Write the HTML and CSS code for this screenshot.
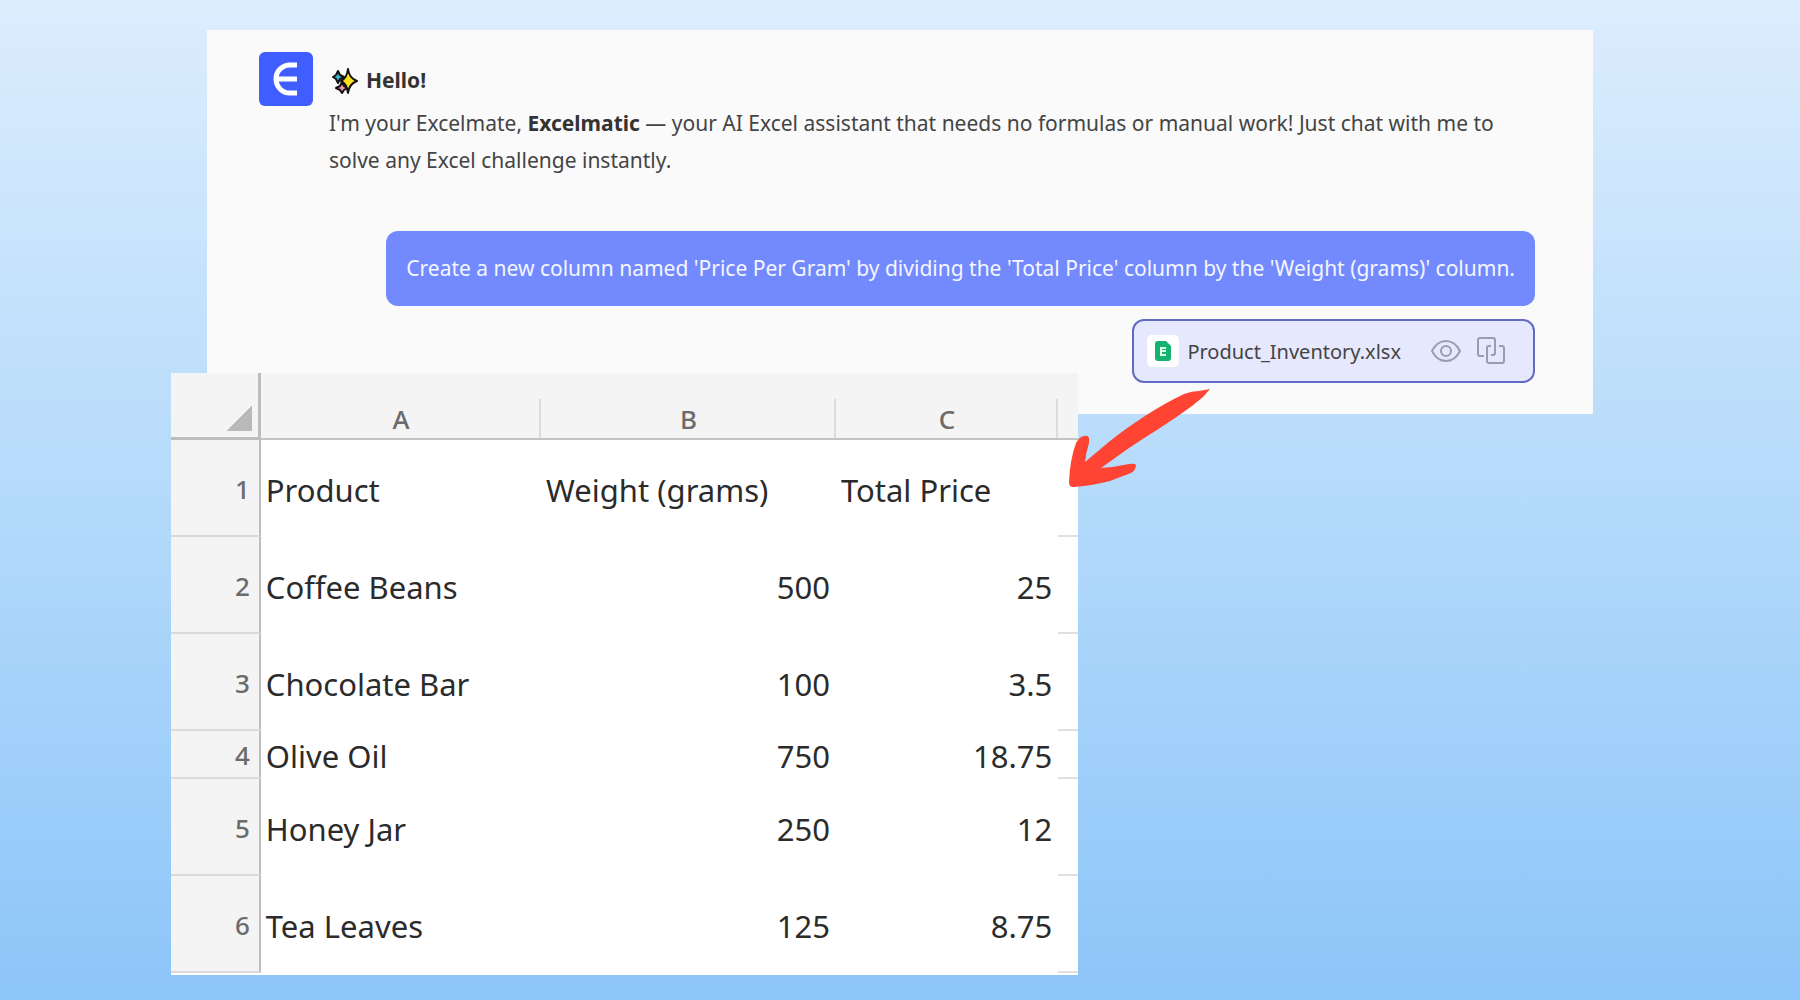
FILE: index.html
```
<!DOCTYPE html>
<html lang="en">
<head>
    <meta charset="UTF-8">
    <meta name="viewport" content="width=device-width, initial-scale=1.0">
    <title>Excelmatic</title>
    <link rel="stylesheet" href="styles.css">
</head>
<body>

    <main class="chat">
        <div class="greeting">
            <svg class="logo" viewBox="0 0 54 54" aria-hidden="true">
                <rect width="54" height="54" rx="6" fill="#405eff"/>
                <path d="M38 13H31A14 14 0 0 0 31 41H38M17 27H38" fill="none" stroke="#fff" stroke-width="5"/>
            </svg>
            <div class="greeting-text">
                <h1 class="hello">
                    <svg class="sparkles" viewBox="0 0 26 26" aria-hidden="true">
                        <g stroke="#111" stroke-width="2" stroke-linejoin="round">
                            <path d="M6 3L8 7L12 9L8 11L6 15L4 11L1 9L4 7Z" fill="#3fb8d4"/>
                            <path d="M10 14L12 18L15 20L12 22L10 25L8 22L4 20L8 18Z" fill="#f296a8"/>
                            <path d="M16 1Q17 10 25 13Q17 16 16 25Q15 16 9 13Q15 10 16 1Z" fill="#fce01c"/>
                        </g>
                    </svg>
                    Hello!
                </h1>
                <p class="intro">I'm your Excelmate, <b>Excelmatic</b> — your AI Excel assistant that needs no formulas or manual work! Just chat with me to solve any Excel challenge instantly.</p>
            </div>
        </div>

        <div class="request">
            <p class="bubble">Create a new column named 'Price Per Gram' by dividing the 'Total Price' column by the 'Weight (grams)' column.</p>
            <div class="file">
                <span class="file-icon">
                    <svg width="16" height="20" viewBox="0 0 16 20" aria-hidden="true">
                        <path d="M3 0H11L16 5V17Q16 20 13 20H3Q0 20 0 17V3Q0 0 3 0Z" fill="#17b26f"/>
                        <path d="M11 7H6V14H11M6 10H11" fill="none" stroke="#d9ffec" stroke-width="2"/>
                    </svg>
                </span>
                <span class="file-name">Product_Inventory.xlsx</span>
                <button class="file-button" aria-label="Preview">
                    <svg width="30" height="22" viewBox="0 0 30 22" aria-hidden="true">
                        <path d="M1 11Q6 1 15 1T29 11Q24 21 15 21T1 11Z"/>
                        <circle cx="15" cy="11" r="5"/>
                    </svg>
                </button>
                <button class="file-button" aria-label="Copy">
                    <svg width="28" height="28" viewBox="0 0 28 28" aria-hidden="true">
                        <path d="M7 19H3Q1 19 1 17V3Q1 1 3 1H16Q18 1 18 3V16Q18 18 16 18H14"/>
                        <path d="M14 9H12Q10 9 10 11V24Q10 26 12 26H25Q27 26 27 24V11Q27 9 25 9H22"/>
                    </svg>
                </button>
            </div>
        </div>
    </main>

    <div class="sheet">
        <table class="sheet-table">
            <colgroup>
                <col class="col-number">
                <col class="col-a">
                <col class="col-b">
                <col class="col-c">
                <col>
            </colgroup>
            <thead>
                <tr>
                    <th class="corner"></th>
                    <th>A</th>
                    <th>B</th>
                    <th>C</th>
                    <th class="rest"></th>
                </tr>
            </thead>
            <tbody>
                <tr><th>1</th><td>Product</td><td>Weight (grams)</td><td>Total Price</td><td class="rest"></td></tr>
                <tr><th>2</th><td>Coffee Beans</td><td class="num">500</td><td class="num">25</td><td class="rest"></td></tr>
                <tr><th>3</th><td>Chocolate Bar</td><td class="num">100</td><td class="num">3.5</td><td class="rest"></td></tr>
                <tr class="short"><th>4</th><td>Olive Oil</td><td class="num">750</td><td class="num">18.75</td><td class="rest"></td></tr>
                <tr><th>5</th><td>Honey Jar</td><td class="num">250</td><td class="num">12</td><td class="rest"></td></tr>
                <tr><th>6</th><td>Tea Leaves</td><td class="num">125</td><td class="num">8.75</td><td class="rest"></td></tr>
            </tbody>
        </table>
        <svg class="arrow" width="150" height="106" viewBox="0 0 150 106" aria-hidden="true">
            <path d="M145 4L134 6Q127 6 119 9Q100 18 80 31Q60 44 45 56L20 77Q21 68 24 58V53Q23 50 19 51Q14 52 11 58Q5 74 4 97Q4 102 8 102Q26 101 45 96L66 88Q71 85 71 80Q70 78 64 79Q50 82 36 83Q50 73 64 63Q79 53 95 43Q112 32 127 21L138 12Z" fill="#ff4433"/>
        </svg>
    </div>

</body>
</html>
```
FILE: styles.css
```
* {
    box-sizing: border-box;
}

body {
    margin: 0;
    min-height: 100vh;
    padding-top: 30px;
    font-family: "Noto Sans", sans-serif;
    background: linear-gradient(#dcedfd, #b8dcfb 45%, #8cc5f9);
}

.chat {
    width: 77%;
    margin-left: 11.5%;
    padding: 22px 58px 31px 52px;
    background-color: #fafafa;
    color: #444444;
    font-size: 21px;
}

.greeting {
    display: flex;
    gap: 16px;
    margin-bottom: 52px;
}

.logo {
    flex: none;
    width: 54px;
    height: 54px;
}

.greeting-text {
    padding-top: 10px;
}

.hello {
    display: flex;
    align-items: center;
    gap: 8px;
    margin: 0;
    padding-left: 3px;
    color: #333333;
    font-size: 21px;
    line-height: 37px;
}

.sparkles {
    width: 26px;
    height: 26px;
}

.intro {
    margin: 6px 0 0;
    line-height: 37px;
}

.intro b {
    color: #333333;
}

.request {
    display: flex;
    flex-direction: column;
    align-items: flex-end;
    gap: 13px;
}

.bubble {
    margin: 0;
    padding: 19px 20px;
    border-radius: 12px;
    background-color: #738aff;
    color: #f4f6ff;
    line-height: 37px;
}

.file {
    display: flex;
    align-items: center;
    height: 64px;
    padding: 0 28px 0 13px;
    border: 2px solid #626bc4;
    border-radius: 12px;
    background-color: #e6e8fd;
}

.file-icon {
    display: flex;
    align-items: center;
    justify-content: center;
    width: 32px;
    height: 32px;
    margin-right: 8px;
    border-radius: 5px;
    background-color: #ffffff;
}

.file-name {
    margin-right: 14px;
    font-size: 20px;
}

.file-button {
    display: flex;
    margin-left: 16px;
    padding: 0;
    border: none;
    background: none;
    cursor: pointer;
}

.file-button svg {
    fill: none;
    stroke: #9a9cb0;
    stroke-width: 2;
}

/* Spreadsheet, lies over the lower left of the chat */
.sheet {
    position: relative;
    width: 50.4%;
    margin: -41px 0 0 9.5%;
    padding-bottom: 2px;
    background-color: #ffffff;
}

.sheet-table {
    width: 100%;
    table-layout: fixed;
    border-spacing: 0;
    color: #2b2b2b;
    font-size: 31px;
}

.col-number {
    width: 9.9%;
}

.col-a {
    width: 30.9%;
}

.col-b {
    width: 32.5%;
}

.col-c {
    width: 24.5%;
}

.sheet-table th {
    background-color: #f4f4f4;
    color: #6b6b6b;
    font-size: 26px;
    font-weight: 500;
}

.sheet-table td {
    padding: 2px 6px 0 5px;
}

.sheet-table thead th {
    height: 67px;
    padding: 26px 0 0;
    border-bottom: 2px solid #c2c2c2;
    background-image: linear-gradient(#dcdcdc, #dcdcdc);
    background-position: right bottom;
    background-repeat: no-repeat;
    background-size: 2px 39px;
}

.sheet-table thead .corner {
    border-right: 3px solid #bdbdbd;
    border-bottom: 3px solid #bdbdbd;
    background-image: linear-gradient(135deg, transparent 50%, #b9b9b9 50%);
    background-position: right 6px bottom 6px;
    background-size: 26px 26px;
}

.sheet-table thead .rest {
    background-image: none;
}

.sheet-table tbody th {
    height: 97px;
    padding: 2px 9px 0 0;
    border-right: 2px solid #bdbdbd;
    border-bottom: 2px solid #dadada;
    text-align: right;
}

.sheet-table .short th {
    height: 48px;
}

.sheet-table .num {
    text-align: right;
}

.sheet-table td.rest {
    border-bottom: 2px solid #e0e0e0;
}

.arrow {
    position: absolute;
    top: 12px;
    left: 100%;
    margin-left: -13px;
}
```
